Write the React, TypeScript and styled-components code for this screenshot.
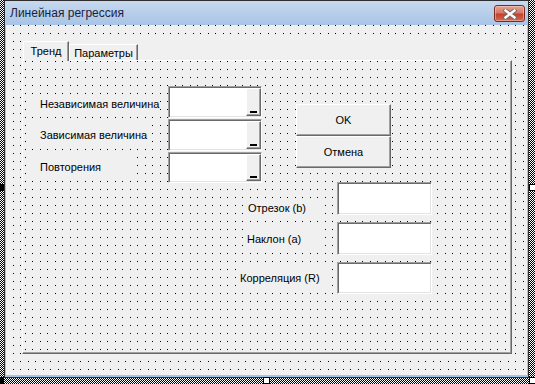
import React from "react";
import styled, { createGlobalStyle, css } from "styled-components";

const GlobalStyle = createGlobalStyle`
  html, body { margin: 0; padding: 0; }
  body {
    width: 535px;
    height: 384px;
    overflow: hidden;
    font-family: "Liberation Sans", Arial, sans-serif;
  }
`;

const dots = (ox: number, oy: number) => css`
  background-color: #f0f0f0;
  background-image: linear-gradient(to bottom, transparent 1px, #f0f0f0 1px),
    linear-gradient(
      to right,
      #000 1px,
      transparent 1px 7px,
      #000 7px 8px,
      transparent 8px
    );
  background-size: 15px 8px, 15px 8px;
  background-position: ${ox}px ${oy}px, ${ox}px ${oy}px;
`;

const Screen = styled.div`
  position: relative;
  width: 535px;
  height: 384px;
  box-sizing: border-box;
  padding-left: 4px;
  background: repeating-conic-gradient(#000 0 25%, #fff 0 50%) 0 0 / 2px 2px;
`;

const Window = styled.div`
  width: 525px;
  height: 378px;
  box-sizing: border-box;
  border: 1px solid #2e2e2e;
  display: flex;
  flex-direction: column;
  background: #f0f0f0;
`;

const TitleBar = styled.div`
  height: 24px;
  flex-shrink: 0;
  display: flex;
  align-items: flex-start;
  justify-content: space-between;
  padding: 0 3px 0 5px;
  background: linear-gradient(#c6d9ef, #a8c4e5);
`;

const Title = styled.span`
  font-size: 12px;
  line-height: 24px;
  color: #1c1c40;
`;

const CloseButton = styled.div`
  margin-top: 4px;
  width: 31px;
  height: 17px;
  box-sizing: border-box;
  border: 1px solid #7a2b20;
  border-radius: 3px;
  background: linear-gradient(#e7a395 0%, #d67a67 45%, #c4412c 55%, #d36a52 100%);
  display: flex;
  align-items: center;
  justify-content: center;
  box-shadow: inset 0 0 0 1px rgba(255, 220, 210, 0.45);
`;

const Body = styled.div`
  flex: 1;
  box-sizing: border-box;
  border: 1px solid #a6c4e6;
  border-top: none;
  border-bottom-width: 2px;
  padding: 13px 0 0 16px;
  ${dots(7, 0)}
`;

const MultiPage = styled.div`
  width: 490px;
  height: 316px;
  display: flex;
  flex-direction: column;
`;

const TabStrip = styled.div`
  height: 22px;
  flex-shrink: 0;
  display: flex;
  align-items: flex-end;
  padding-left: 1px;
  background: #f0f0f0;
  position: relative;
  z-index: 1;
`;

const Tab = styled.div<{ $active?: boolean; $w: number }>`
  box-sizing: border-box;
  width: ${(p) => p.$w}px;
  height: ${(p) => (p.$active ? 20 : 16)}px;
  margin-bottom: ${(p) => (p.$active ? -1 : 0)}px;
  border-top: 1px solid #fff;
  border-left: 1px solid #fff;
  border-right: 1px solid #696969;
  box-shadow: inset -1px 0 0 #a0a0a0;
  background: #f0f0f0;
  font-size: 11px;
  color: #000;
  display: flex;
  align-items: center;
  justify-content: center;
  padding-bottom: ${(p) => (p.$active ? 2 : 0)}px;
`;

const Page = styled.div`
  flex: 1;
  box-sizing: border-box;
  border-top: 1px solid #fff;
  border-left: 1px solid #fff;
  border-right: 1px solid #696969;
  border-bottom: 1px solid #696969;
  box-shadow: inset -1px -1px 0 #a0a0a0;
  padding: 25px 0 0 7px;
  ${dots(2, 0)}
`;

const TopSection = styled.div`
  display: flex;
  align-items: flex-start;
`;

const LeftGrid = styled.div`
  display: grid;
  grid-template-columns: 138px 94px;
  grid-template-rows: 32px 32px 31px;
  row-gap: 1px;
`;

const RightGrid = styled.div`
  margin: -1px 0 0 205px;
  display: grid;
  grid-template-columns: 102px 95px;
  grid-template-rows: 33px 33px 32px;
  row-gap: 7px;
`;

const Label = styled.div<{ $x: number; $y: number; $w: number; $pad: number }>`
  align-self: start;
  justify-self: start;
  box-sizing: border-box;
  margin: ${(p) => p.$y}px 0 0 ${(p) => p.$x}px;
  width: ${(p) => p.$w}px;
  height: 20px;
  padding-left: ${(p) => p.$pad}px;
  background: #f0f0f0;
  font-size: 11px;
  line-height: 20px;
  color: #000;
  white-space: nowrap;
`;

const sunken = css`
  box-sizing: border-box;
  border: 1px solid;
  border-color: #a0a0a0 #fff #fff #a0a0a0;
  box-shadow: inset 1px 1px 0 #696969, inset -1px -1px 0 #e3e3e3;
  background: #fff;
`;

const raised = css`
  box-sizing: border-box;
  border: 1px solid;
  border-color: #fff #696969 #696969 #fff;
  box-shadow: inset -1px -1px 0 #a0a0a0;
  background: #f0f0f0;
`;

const TextBox = styled.div`
  ${sunken}
`;

const RefEdit = styled.div`
  ${sunken}
  display: flex;
  justify-content: flex-end;
  padding: 1px 0;
`;

const RefButton = styled.div`
  ${raised}
  width: 15px;
  display: flex;
  align-items: flex-end;
  justify-content: center;
  padding-bottom: 2px;
`;

const RefBar = styled.div`
  width: 7px;
  height: 2px;
  background: #000;
`;

const ButtonColumn = styled.div`
  margin: 18px 0 0 34px;
  width: 95px;
  display: flex;
  flex-direction: column;
`;

const CommandButton = styled.div`
  ${raised}
  height: 32px;
  display: flex;
  align-items: center;
  justify-content: center;
  font-size: 11px;
  color: #000;
`;

const Handle = styled.div<{ $x: number; $y: number; $filled?: boolean }>`
  position: absolute;
  left: ${(p) => p.$x}px;
  top: ${(p) => p.$y}px;
  width: 7px;
  height: 7px;
  box-sizing: border-box;
  border: 1px solid #000;
  background: ${(p) => (p.$filled ? "#000" : "#fff")};
`;

const CloseIcon = () => (
  <svg width="14" height="10" viewBox="0 0 14 10">
    <path d="M2.5 1.5 L11.5 8.5 M11.5 1.5 L2.5 8.5" stroke="#6b6b6b" strokeWidth="4.2" strokeLinecap="square" />
    <path d="M2.5 1.5 L11.5 8.5 M11.5 1.5 L2.5 8.5" stroke="#fff" strokeWidth="2.4" strokeLinecap="square" />
  </svg>
);

const leftRows = [
  { label: "Независимая величина", x: 2, y: 8, w: 126, pad: 8 },
  { label: "Зависимая величина", x: 2, y: 6, w: 118, pad: 8 },
  { label: "Повторения", x: 2, y: 5, w: 102, pad: 8 },
];

const rightRows = [
  { label: "Отрезок (b)", x: 8, y: 16, w: 77, pad: 5 },
  { label: "Наклон (а)", x: 8, y: 7, w: 75, pad: 4 },
  { label: "Корреляция (R)", x: 3, y: 6, w: 88, pad: 2 },
];

export default function App() {
  return (
    <>
      <GlobalStyle />
      <Screen>
        <Window>
          <TitleBar>
            <Title>Линейная регрессия</Title>
            <CloseButton>
              <CloseIcon />
            </CloseButton>
          </TitleBar>
          <Body>
            <MultiPage>
              <TabStrip>
                <Tab $active $w={46}>Тренд</Tab>
                <Tab $w={69}>Параметры</Tab>
              </TabStrip>
              <Page>
                <TopSection>
                  <LeftGrid>
                    {leftRows.map((r) => (
                      <React.Fragment key={r.label}>
                        <Label $x={r.x} $y={r.y} $w={r.w} $pad={r.pad}>
                          {r.label}
                        </Label>
                        <RefEdit>
                          <RefButton>
                            <RefBar />
                          </RefButton>
                        </RefEdit>
                      </React.Fragment>
                    ))}
                  </LeftGrid>
                  <ButtonColumn>
                    <CommandButton>OK</CommandButton>
                    <CommandButton>Отмена</CommandButton>
                  </ButtonColumn>
                </TopSection>
                <RightGrid>
                  {rightRows.map((r) => (
                    <React.Fragment key={r.label}>
                      <Label $x={r.x} $y={r.y} $w={r.w} $pad={r.pad}>
                        {r.label}
                      </Label>
                      <TextBox />
                    </React.Fragment>
                  ))}
                </RightGrid>
              </Page>
            </MultiPage>
          </Body>
        </Window>
        <Handle $x={-3} $y={184} $filled />
        <Handle $x={-3} $y={377} $filled />
        <Handle $x={263} $y={377} />
        <Handle $x={529} $y={184} />
        <Handle $x={529} $y={377} />
      </Screen>
    </>
  );
}
